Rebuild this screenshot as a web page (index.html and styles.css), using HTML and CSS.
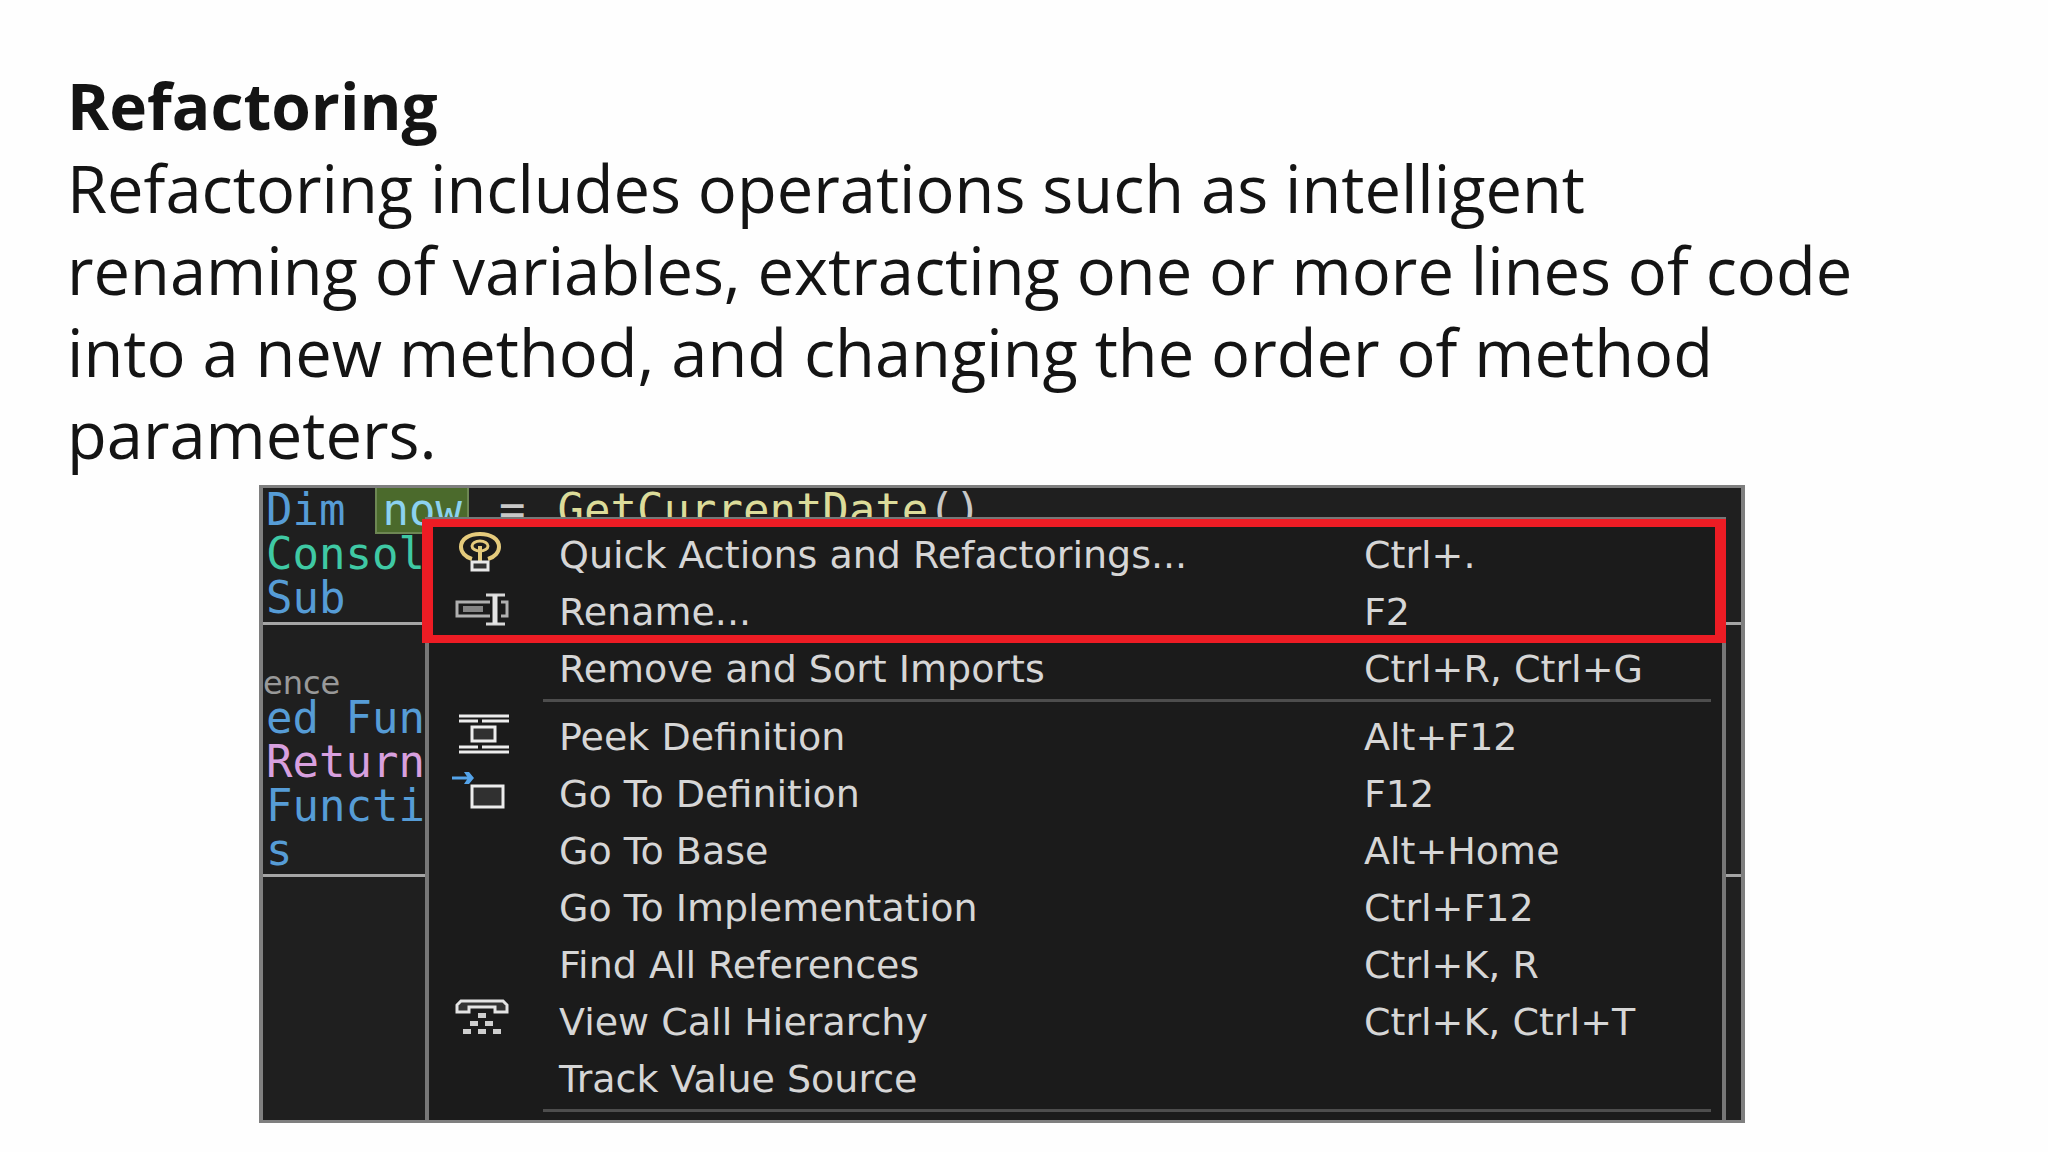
FILE: index.html
```
<!DOCTYPE html>
<html lang="en">
<head>
  <meta charset="UTF-8">
  <title>Refactoring</title>
  <link rel="stylesheet" href="styles.css">
</head>

<body>

<main class="slide">
  <h1>Refactoring</h1>
  <p class="intro">Refactoring includes operations such as intelligent<br>
    renaming of variables, extracting one or more lines of code<br>
    into a new method, and changing the order of method<br>
    parameters.</p>

  <div class="window">
    <div class="editor">
      <div class="line first"><span class="keyword">Dim</span><span class="selected">now</span><span class="operator">=</span><span class="method">GetCurrentDate<span class="paren">()</span></span></div>
      <div class="line type">Consol</div>
      <div class="line keyword">Sub</div>
      <div class="rule"></div>
      <div class="reference">ence</div>
      <div class="line keyword">ed Fun</div>
      <div class="line control">Return</div>
      <div class="line keyword">Functi</div>
      <div class="line keyword">s</div>
      <div class="rule"></div>
    </div>

    <div class="menu">
      <div class="highlight">
        <button class="item">
          <svg class="icon" viewBox="0 0 64 57">
            <path d="M22 33C15 31 11 26 11 21C11 13 19 8 30 8S49 13 49 21C49 26 45 31 38 33" fill="none" stroke="#e5cb7c" stroke-width="4"/>
            <ellipse cx="30" cy="20" rx="8" ry="5" fill="none" stroke="#e5cb7c" stroke-width="3"/>
            <path d="M30 20V35" stroke="#e5cb7c" stroke-width="4"/>
            <rect x="22" y="36" width="16" height="8" fill="#333" stroke="#e8e8e8" stroke-width="3"/>
          </svg>
          <span class="label">Quick Actions and Refactorings...</span>
          <kbd>Ctrl+.</kbd>
        </button>
        <button class="item">
          <svg class="icon" viewBox="0 0 64 57">
            <path d="M40 19H7V33H40M51 19H57V33H51" fill="none" stroke="#b0b0b0" stroke-width="3"/>
            <rect x="13" y="23" width="20" height="6" fill="#858585"/>
            <path d="M36 12H55M36 41H55" stroke="#d8d8d8" stroke-width="3"/>
            <path d="M45 12V41" stroke="#e4e4e4" stroke-width="5"/>
          </svg>
          <span class="label">Rename...</span>
          <kbd>F2</kbd>
        </button>
      </div>
      <button class="item">
        <span class="label">Remove and Sort Imports</span>
        <kbd>Ctrl+R, Ctrl+G</kbd>
      </button>
      <hr>
      <button class="item">
        <svg class="icon" viewBox="0 0 64 57">
          <path d="M9 8H59M9 44H59" stroke="#ededed" stroke-width="3"/>
          <path d="M9 13H28M32 13H59M9 39H28M32 39H59" stroke="#ededed" stroke-width="3"/>
          <rect x="22" y="19" width="23" height="14" fill="#303030" stroke="#ededed" stroke-width="3"/>
        </svg>
        <span class="label">Peek Definition</span>
        <kbd>Alt+F12</kbd>
      </button>
      <button class="item">
        <svg class="icon" viewBox="0 0 64 57">
          <path d="M2 13H20" stroke="#55a4ea" stroke-width="3"/>
          <path d="M14 7H19L24 13L19 19H14L18 13Z" fill="#55a4ea"/>
          <rect x="22" y="21" width="31" height="21" fill="#303030" stroke="#ededed" stroke-width="3"/>
        </svg>
        <span class="label">Go To Definition</span>
        <kbd>F12</kbd>
      </button>
      <button class="item">
        <span class="label">Go To Base</span>
        <kbd>Alt+Home</kbd>
      </button>
      <button class="item">
        <span class="label">Go To Implementation</span>
        <kbd>Ctrl+F12</kbd>
      </button>
      <button class="item">
        <span class="label">Find All References</span>
        <kbd>Ctrl+K, R</kbd>
      </button>
      <button class="item">
        <svg class="icon" viewBox="0 0 64 57">
          <path d="M11 8H53L57 12V19H45V14H19V19H7V12Z" fill="#333" stroke="#e4e4e4" stroke-width="3"/>
          <path d="M28 20h8v5h-8zM20 28h8v5h-8zM35 28h8v5h-8zM13 36h8v5h-8zM28 36h8v5h-8zM43 36h8v5h-8z" fill="#cfcfcf"/>
        </svg>
        <span class="label">View Call Hierarchy</span>
        <kbd>Ctrl+K, Ctrl+T</kbd>
      </button>
      <button class="item">
        <span class="label">Track Value Source</span>
      </button>
      <hr>
    </div>
  </div>
</main>

</body>
</html>
```
FILE: styles.css
```
:root {
  --editor: #1f1f1f;
  --menu: #1b1b1b;
  --frame: #7f7f7f;
  --red: #ed1c24;
}
* { margin: 0; padding: 0; box-sizing: border-box; }
body {
  font-family: "Open Sans", "Noto Sans", sans-serif;
  background: #fefefe;
  color: #141414;
}
.slide { padding: 65px 67px 28px; }
h1, .intro {
  font-size: 65px;
  line-height: 82px;
}
h1 {
  font-size: 64px;
  font-weight: 700;
}
.window {
  display: grid;
  margin: 10px 236px 0 192px;
  border: 3px solid var(--frame);
  border-width: 3px 4px;
  background: var(--editor);
  overflow: hidden;
}
/* the menu sits over the code, both share one grid cell */
.editor, .menu { grid-area: 1 / 1; }
.editor {
  font-family: "DejaVu Sans Mono", monospace;
  font-size: 44px;
  min-width: 0;
}
.line {
  line-height: 44px;
  padding-left: 3px;
  white-space: pre;
}
.first {
  display: flex;
  gap: 32px;
}
.keyword { color: #569cd6; }
.type { color: #3fc9a4; }
.control { color: #d8a0df; }
.method { color: #dcdc9a; }
.operator, .paren { color: #c8c8c8; }
.selected {
  padding: 0 5px;
  background: #4b6a2c;
  color: #8cd2f0;
  outline: 2px solid #6d8753;
}
.rule {
  height: 3px;
  margin-top: 2px;
  background: #a5a5a5;
}
.reference {
  padding-top: 45px;
  font-family: "DejaVu Sans", sans-serif;
  font-size: 32px;
  line-height: 26px;
  color: #999;
}
.menu {
  position: relative;
  margin: 29px 15px 0 162px;
  padding: 7px 0 8px;
  border: 4px solid #777;
  border-width: 2px 4px 0;
  background: var(--menu);
}
.highlight::after {
  content: "";
  position: absolute;
  top: 0;
  left: -7px;
  right: -4px;
  height: 124px;
  box-sizing: border-box;
  border: solid var(--red);
  border-width: 8px 11px;
  pointer-events: none;
}
.item {
  display: grid;
  grid-template-columns: 109px 1fr 358px;
  align-items: center;
  width: 100%;
  height: 57px;
  padding-left: 21px;
  border: none;
  background: none;
  color: #d6d6d6;
  font-family: "DejaVu Sans", sans-serif;
  font-size: 38px;
  line-height: 44px;
  text-align: left;
  white-space: nowrap;
}
.icon {
  width: 64px;
  height: 57px;
}
.label { grid-column: 2; }
kbd {
  grid-column: 3;
  font-family: inherit;
  font-size: 38px;
}
hr {
  height: 3px;
  margin: 2px 11px 6px 114px;
  border: none;
  background: #4d4d4d;
}
.menu hr:last-child { margin-bottom: 0; }
```
